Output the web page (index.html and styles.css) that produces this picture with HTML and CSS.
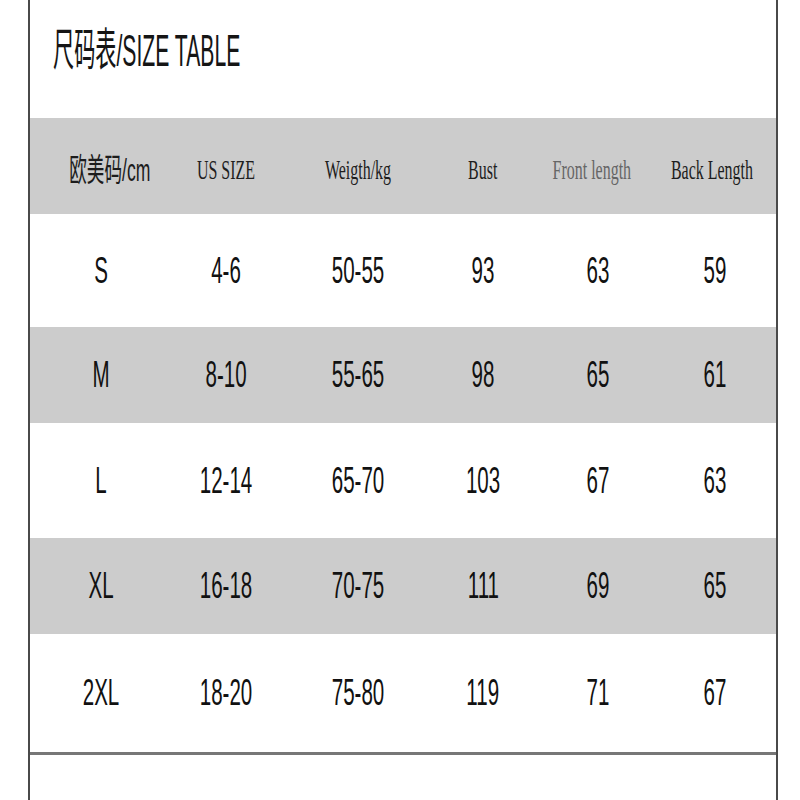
FILE: index.html
```html
<!DOCTYPE html>
<html lang="zh">
<head>
<meta charset="utf-8">
<title>尺码表/SIZE TABLE</title>
<link rel="stylesheet" href="styles.css">
</head>
<body>
<div class="frame">
  <div class="title"><span class="sq title-text">尺码表/SIZE TABLE</span></div>
  <div class="table">
    <div class="row head">
      <div class="cell c-eu"><span class="sq cjk">欧美码/cm</span></div>
      <div class="cell"><span class="sq serif">US SIZE</span></div>
      <div class="cell"><span class="sq serif">Weigth/kg</span></div>
      <div class="cell"><span class="sq serif">Bust</span></div>
      <div class="cell c-front"><span class="sq serif light">Front length</span></div>
      <div class="cell c-back"><span class="sq serif">Back Length</span></div>
    </div>
    <div class="row white h113">
      <div class="cell"><span class="sq num">S</span></div>
      <div class="cell"><span class="sq num">4-6</span></div>
      <div class="cell"><span class="sq num">50-55</span></div>
      <div class="cell"><span class="sq num">93</span></div>
      <div class="cell"><span class="sq num">63</span></div>
      <div class="cell"><span class="sq num">59</span></div>
    </div>
    <div class="row gray">
      <div class="cell"><span class="sq num">M</span></div>
      <div class="cell"><span class="sq num">8-10</span></div>
      <div class="cell"><span class="sq num">55-65</span></div>
      <div class="cell"><span class="sq num">98</span></div>
      <div class="cell"><span class="sq num">65</span></div>
      <div class="cell"><span class="sq num">61</span></div>
    </div>
    <div class="row white h115">
      <div class="cell"><span class="sq num">L</span></div>
      <div class="cell"><span class="sq num">12-14</span></div>
      <div class="cell"><span class="sq num">65-70</span></div>
      <div class="cell"><span class="sq num">103</span></div>
      <div class="cell"><span class="sq num">67</span></div>
      <div class="cell"><span class="sq num">63</span></div>
    </div>
    <div class="row gray">
      <div class="cell"><span class="sq num">XL</span></div>
      <div class="cell"><span class="sq num">16-18</span></div>
      <div class="cell"><span class="sq num">70-75</span></div>
      <div class="cell"><span class="sq num">111</span></div>
      <div class="cell"><span class="sq num">69</span></div>
      <div class="cell"><span class="sq num">65</span></div>
    </div>
    <div class="row white h118">
      <div class="cell"><span class="sq num">2XL</span></div>
      <div class="cell"><span class="sq num">18-20</span></div>
      <div class="cell"><span class="sq num">75-80</span></div>
      <div class="cell"><span class="sq num">119</span></div>
      <div class="cell"><span class="sq num">71</span></div>
      <div class="cell"><span class="sq num">67</span></div>
    </div>
  </div>
  <div class="rule"></div>
</div>
</body>
</html>
```

FILE: styles.css
```css
html, body {
  margin: 0;
  padding: 0;
  background: #ffffff;
}

body {
  width: 800px;
  height: 800px;
  overflow: hidden;
  font-family: "Liberation Sans", "Noto Sans CJK SC", sans-serif;
  color: #111111;
}

.frame {
  margin-left: 28px;
  width: 750px;
  height: 800px;
  box-sizing: border-box;
  border-left: 2px solid #4a4a4a;
  border-right: 2px solid #4a4a4a;
}

.title {
  height: 118px;
  box-sizing: border-box;
  padding-left: 23px;
  padding-top: 24px;
  line-height: 54px;
}

.sq {
  display: inline-block;
  white-space: nowrap;
  flex: none;
}

.title-text {
  font-family: "Liberation Sans", "Noto Sans CJK SC", sans-serif;
  font-size: 45px;
  color: #151515;
  transform: scaleX(0.47);
  transform-origin: left center;
}

.table {
  display: flex;
  flex-direction: column;
}

.row {
  display: grid;
  grid-template-columns: 142px 108px 156px 94px 136px 98px;
  align-items: center;
}

.head {
  height: 96px;
  background: #cccccc;
  padding-top: 8px;
  box-sizing: border-box;
}

.gray {
  height: 96px;
  background: #cccccc;
}

.white {
  background: #ffffff;
}

.h113 { height: 113px; }
.h115 { height: 115px; }
.h118 { height: 118px; }

.cell {
  display: flex;
  justify-content: center;
  align-items: center;
  line-height: 40px;
  min-width: 0;
}

.c-eu {
  padding-left: 18px;
}

.c-front {
  padding-right: 12px;
}

.c-back {
  padding-right: 6px;
}

.cjk {
  font-family: "Liberation Sans", "Noto Sans CJK SC", sans-serif;
  font-size: 32px;
  color: #1c1c1c;
  transform: scaleX(0.55);
}

.serif {
  font-family: "Liberation Serif", serif;
  font-size: 28px;
  color: #1e1e1e;
  transform: scaleX(0.57);
}

.serif.light {
  color: #666666;
}

.num {
  font-family: "Liberation Sans", sans-serif;
  font-size: 36px;
  color: #111111;
  transform: scaleX(0.57);
}

.rule {
  height: 3px;
  background: #777777;
}
```
